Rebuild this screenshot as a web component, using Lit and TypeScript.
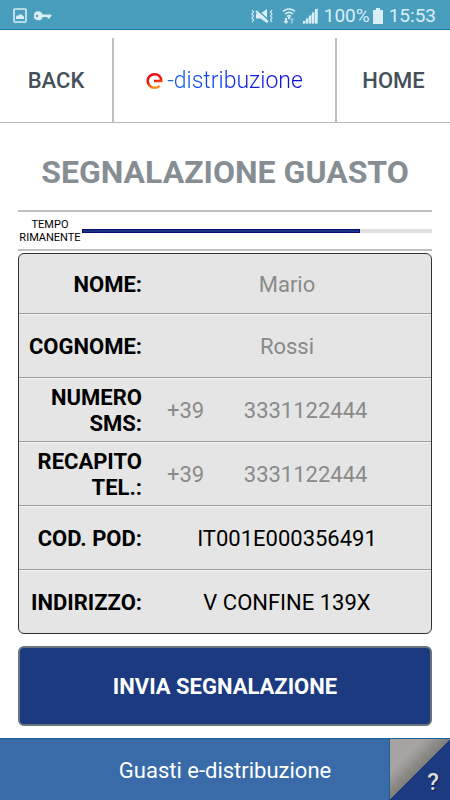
import { LitElement, html, css } from "lit";
import { customElement, property, state } from "lit/decorators.js";

interface Field {
  id: string;
  label: string;
  value: string;
  prefix?: string;
  fixed?: boolean;
}

@customElement("status-bar")
class StatusBar extends LitElement {
  @property() time = "";
  @property() battery = "";

  static styles = css`
    :host {
      display: flex;
      align-items: center;
      height: 30px;
      box-sizing: border-box;
      padding: 2px 14px 0 13px;
      background: #499ebe;
      border-bottom: 1px solid #1581aa;
      color: #d9eef6;
      font-size: 19px;
      line-height: 27px;
    }
    svg { display: block; fill: currentColor; }
    .left, .right { display: flex; align-items: center; }
    .left { gap: 7px; }
    .right { margin-left: auto; }
    .mute { margin-right: 9px; }
    .wifi { margin-right: 6px; }
    .signal { margin-right: 6px; }
    .battery { margin: 0 6px 0 3px; }
    .line { fill: none; stroke: currentColor; }
    .cut { fill: none; stroke: #499ebe; }
    .dim { opacity: 0.45; }
  `;

  render() {
    return html`
      <div class="left">
        <svg width="14" height="15" viewBox="0 0 14 15" aria-hidden="true">
          <rect class="line" x="1" y="1" width="12" height="13" rx="1" stroke-width="1.6"></rect>
          <path d="M3 11V9l1-2 1 1 2-2 1 1 1-.5L11 9v2z"></path>
        </svg>
        <svg width="18" height="10" viewBox="0 0 18 10" aria-hidden="true">
          <path fill-rule="evenodd" d="M4.500.3C6.500.3 8 1.800 8.700 3.500H16.500L17.800 4.700 16.500 6H16V7.500H13.500V6H8.700A4.500 4.500 0 1 1 4.500.3zM3 3.700a1.200 1.200 0 1 0 0 2.400 1.200 1.200 0 0 0 0-2.400z"></path>
        </svg>
      </div>
      <div class="right">
        <svg class="mute" width="22" height="16" viewBox="0 0 22 16" aria-hidden="true">
          <path d="M5 5.500h4.500L16 1v14l-6.500-4.500H5z"></path>
          <path class="cut" stroke-width="1.500" d="M6 1.500 18 12.500"></path>
          <path class="line" stroke-width="1.800" d="M5 3 17 14"></path>
          <path class="line" stroke-width="1.200" d="M1 2l1.500 2L1 6l1.500 2L1 10l1.500 2L1 14M21 2l-1.500 2L21 6l-1.500 2L21 10l-1.500 2L21 14"></path>
        </svg>
        <svg class="wifi" width="14" height="16" viewBox="0 0 14 16" aria-hidden="true">
          <path class="line" stroke-width="1.600" d="M1 3.300Q7-1.300 13 3.300M3 6Q7 2.700 11 6M5 8.500Q7 6.700 9 8.500"></path>
          <circle cx="7" cy="10" r="1.200"></circle>
          <path d="M3 10h2v3h1.500L4 16l-2.500-3H3z"></path>
          <path class="dim" d="M10 9.500 12.500 12H11v3.500H9V12H7.500z"></path>
        </svg>
        <svg class="signal" width="16" height="16" viewBox="0 0 16 16" aria-hidden="true">
          <path d="M1 13h2v2.500H1zM4 10.500h2v5H4zM7 7.500h2v8H7zM10 4.500h2v11h-2zM13 1h2.500v14.500H13z"></path>
          <path class="dim" d="M0 15.500 16 0v15.500z"></path>
        </svg>
        <span>${this.battery}</span>
        <svg class="battery" width="10" height="16" viewBox="0 0 10 16" aria-hidden="true">
          <path d="M3 0h4v2h3v14H0V2h3z"></path>
        </svg>
        <span>${this.time}</span>
      </div>
    `;
  }
}

@customElement("brand-logo")
class BrandLogo extends LitElement {
  static styles = css`
    :host {
      display: flex;
      align-items: center;
      padding-top: 2px;
      font-family: Roboto, sans-serif;
      font-size: 23px;
      font-weight: 300;
      line-height: 28px;
    }
    svg { display: block; margin-right: 3px; }
    .name {
      background: linear-gradient(90deg, #1268f3, #0a1fe6 60%, #0a10dc);
      background-clip: text;
      -webkit-background-clip: text;
      color: transparent;
    }
  `;

  render() {
    return html`
      <svg width="18" height="18" viewBox="0 0 18 18" aria-hidden="true">
        <defs>
          <linearGradient id="flame" x1="0" y1="0" x2="0.300" y2="1">
            <stop offset="0" stop-color="#e3061c"></stop>
            <stop offset="0.600" stop-color="#f01c10"></stop>
            <stop offset="1" stop-color="#ff8a1c"></stop>
          </linearGradient>
        </defs>
        <path fill="none" stroke="url(#flame)" stroke-width="2.600"
          d="M8 9H15.200C15.200 4.500 12.300 2.200 8.500 2.200A6.800 6.800 0 0 0 8.500 15.800C10.500 15.800 12.200 15.300 13.600 13.900"></path>
      </svg>
      <span class="name">-distribuzione</span>
    `;
  }
}

@customElement("app-root")
class AppRoot extends LitElement {
  @state() private fields: Field[] = [
    { id: "nome", label: "NOME:", value: "Mario" },
    { id: "cognome", label: "COGNOME:", value: "Rossi" },
    { id: "sms", label: "NUMERO SMS:", value: "3331122444", prefix: "+39" },
    { id: "tel", label: "RECAPITO TEL.:", value: "3331122444", prefix: "+39" },
    { id: "pod", label: "COD. POD:", value: "IT001E000356491", fixed: true },
    { id: "indirizzo", label: "INDIRIZZO:", value: "V CONFINE 139X", fixed: true },
  ];

  static styles = css`
    :host {
      display: flex;
      flex-direction: column;
      min-height: 100vh;
      background: #fff;
      font-family: Roboto, sans-serif;
      color: #000;
    }
    button, input { font: inherit; margin: 0; }
    button { cursor: pointer; }

    .nav {
      display: grid;
      grid-template-columns: 112fr 225fr 113fr;
      padding-top: 8px;
      border-bottom: 1px solid #b8b8b8;
    }
    .nav-button {
      height: 84px;
      padding: 0;
      border: 0;
      background: none;
      color: #465059;
      font-size: 22px;
      font-weight: 500;
    }
    .brand {
      display: flex;
      align-items: center;
      justify-content: center;
      border: solid #c0c0c0;
      border-width: 0 2px;
    }

    main {
      flex: 1;
      padding: 0 18px 12px;
    }
    h1 {
      margin: 28px 0 17px;
      color: #868e94;
      font-size: 32px;
      font-weight: 700;
      line-height: 42px;
      text-align: center;
      white-space: nowrap;
    }
    .timer {
      display: flex;
      align-items: center;
      height: 37px;
      margin-bottom: 2px;
      border: solid #c0c0c0;
      border-width: 2px 0;
    }
    .timer label {
      width: 64px;
      padding-top: 1px;
      font-size: 11px;
      line-height: 13px;
      text-align: center;
    }
    progress {
      appearance: none;
      -webkit-appearance: none;
      flex: 1;
      min-width: 0;
      height: 4px;
      border: 0;
    }
    progress::-webkit-progress-bar { background: #dfdfdf; }
    progress::-webkit-progress-value {
      box-sizing: border-box;
      background: #1c3583;
      border: 1px solid #0a0a72;
    }

    .fields {
      overflow: hidden;
      border: 1px solid #2c343a;
      border-radius: 6px;
      background: #e5e5e5;
      font-size: 22px;
    }
    .row {
      display: grid;
      grid-template-columns: 123px minmax(0, 1fr);
      align-items: center;
      box-sizing: border-box;
      min-height: 64px;
      padding-top: 2px;
      border-top: 1px solid #999;
      box-shadow: inset 0 1px #f6f6f6;
    }
    .row:first-child {
      min-height: 59px;
      border-top: 0;
      box-shadow: none;
    }
    .row label {
      font-weight: 700;
      line-height: 26px;
      text-align: right;
    }
    .value {
      display: flex;
      align-items: center;
      padding: 0 24px 0 25px;
      color: #8a8a8a;
      line-height: 30px;
    }
    .value input {
      flex: 1;
      min-width: 0;
      height: 30px;
      padding: 0;
      border: 0;
      outline: 0;
      background: none;
      color: inherit;
      text-align: center;
    }
    .value.fixed { color: #000; }

    .submit {
      width: 100%;
      height: 80px;
      margin-top: 12px;
      border: 2px solid #69737e;
      border-radius: 6px;
      background: #1c3a80;
      color: #fff;
      font-size: 22px;
      font-weight: 700;
    }

    footer {
      display: flex;
      align-items: stretch;
      height: 62px;
      box-sizing: border-box;
      border-top: 1px solid #1261a0;
      background: #386ba8;
      color: #fff;
      font-size: 22px;
    }
    .caption {
      flex: 1;
      padding-left: 61px;
      line-height: 63px;
      text-align: center;
    }
    .help {
      display: flex;
      align-items: flex-end;
      justify-content: flex-end;
      width: 61px;
      padding: 0 11px 6px 0;
      border: 0;
      border-left: 1px solid #235e92;
      background: linear-gradient(135deg, #a7a3a2 0 28%, #7c7c78 50%, #1c3a80 50%);
      color: #dcdcdc;
      font-size: 24px;
      font-weight: 500;
      line-height: 24px;
      text-shadow: 1px 1px 1px #0b1b48;
    }
  `;

  private edit(id: string, e: Event) {
    const value = (e.target as HTMLInputElement).value;
    this.fields = this.fields.map((f) => (f.id === id ? { ...f, value } : f));
  }

  private renderField(f: Field) {
    return html`
      <div class="row">
        <label for=${f.id}>${f.label}</label>
        <div class="value ${f.fixed ? "fixed" : ""}">
          ${f.prefix ? html`<span>${f.prefix}</span>` : ""}
          <input
            id=${f.id}
            type=${f.prefix ? "tel" : "text"}
            .value=${f.value}
            ?readonly=${f.fixed}
            @input=${(e: Event) => this.edit(f.id, e)}
          />
        </div>
      </div>
    `;
  }

  render() {
    return html`
      <status-bar battery="100%" time="15:53"></status-bar>
      <nav class="nav">
        <button class="nav-button" type="button">BACK</button>
        <div class="brand"><brand-logo></brand-logo></div>
        <button class="nav-button" type="button">HOME</button>
      </nav>
      <main>
        <h1>SEGNALAZIONE GUASTO</h1>
        <div class="timer">
          <label for="remaining">TEMPO RIMANENTE</label>
          <progress id="remaining" max="350" value="278"></progress>
        </div>
        <form @submit=${(e: Event) => e.preventDefault()}>
          <div class="fields">${this.fields.map((f) => this.renderField(f))}</div>
          <button class="submit" type="submit">INVIA SEGNALAZIONE</button>
        </form>
      </main>
      <footer>
        <span class="caption">Guasti e-distribuzione</span>
        <button class="help" type="button">?</button>
      </footer>
    `;
  }
}
